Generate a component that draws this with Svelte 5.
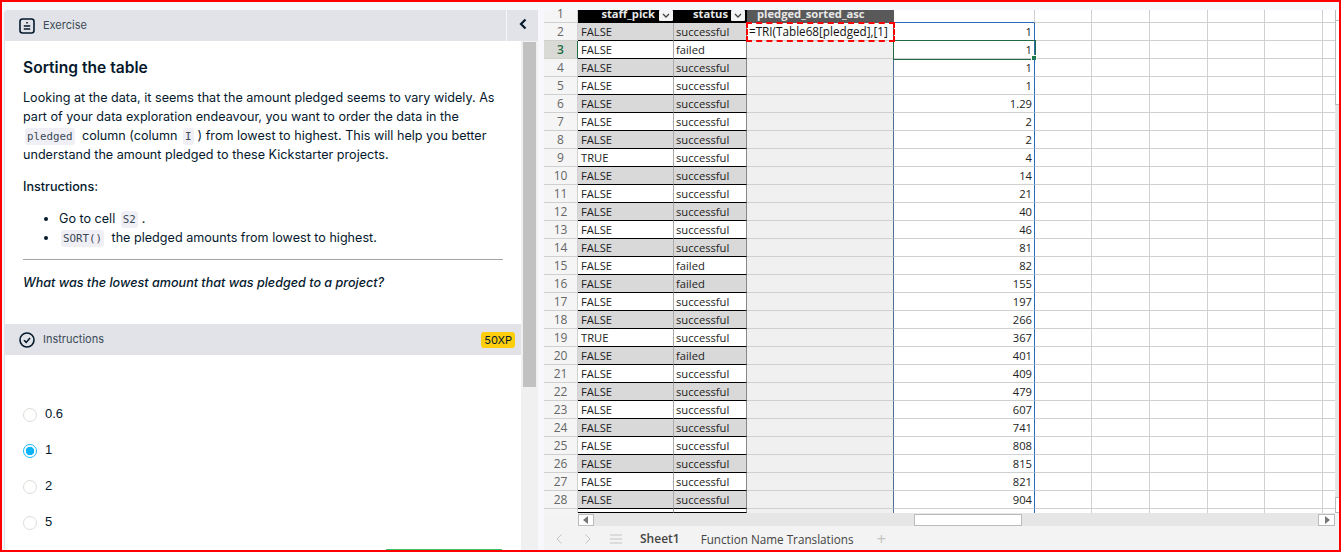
<script>
  const rows = [
    ['FALSE', 'successful', '1'],
    ['FALSE', 'failed', '1'],
    ['FALSE', 'successful', '1'],
    ['FALSE', 'successful', '1'],
    ['FALSE', 'successful', '1.29'],
    ['FALSE', 'successful', '2'],
    ['FALSE', 'successful', '2'],
    ['TRUE', 'successful', '4'],
    ['FALSE', 'successful', '14'],
    ['FALSE', 'successful', '21'],
    ['FALSE', 'successful', '40'],
    ['FALSE', 'successful', '46'],
    ['FALSE', 'successful', '81'],
    ['FALSE', 'failed', '82'],
    ['FALSE', 'failed', '155'],
    ['FALSE', 'successful', '197'],
    ['FALSE', 'successful', '266'],
    ['TRUE', 'successful', '367'],
    ['FALSE', 'failed', '401'],
    ['FALSE', 'successful', '409'],
    ['FALSE', 'successful', '479'],
    ['FALSE', 'successful', '607'],
    ['FALSE', 'successful', '741'],
    ['FALSE', 'successful', '808'],
    ['FALSE', 'successful', '815'],
    ['FALSE', 'successful', '821'],
    ['FALSE', 'successful', '904']
  ];
  const options = ['0.6', '1', '2', '5'];
  let picked = '1';
  const blanks = [0, 1, 2, 3, 4, 5];
</script>

<div class="frame">
  <section class="left">
    <header class="bar top">
      <svg class="bar-icon" width="16" height="16" viewBox="0 0 16 16" fill="none" stroke="#05192d" stroke-width="1.6">
        <rect x="1" y="1" width="14" height="14" rx="2.5" />
        <path d="M8 4v1.400M4.800 8h6.400M4.800 11h6.400" />
      </svg>
      <span>Exercise</span>
      <button class="collapse" type="button" aria-label="Collapse">
        <svg width="10" height="12" viewBox="0 0 10 12" fill="none" stroke="#05192d" stroke-width="2.200"><path d="M7.500 1.500 3 6l4.500 4.500" /></svg>
      </button>
    </header>

    <div class="panel">
      <div class="content">
        <div class="text">
          <h1>Sorting the table</h1>
          <p>Looking at the data, it seems that the amount pledged seems to vary widely. As part of your data exploration endeavour, you want to order the data in the <code>pledged</code> column (column <code>I</code>) from lowest to highest. This will help you better understand the amount pledged to these Kickstarter projects.</p>
          <p class="label">Instructions:</p>
          <ul>
            <li>Go to cell <code>S2</code>.</li>
            <li><code>SORT()</code> the pledged amounts from lowest to highest.</li>
          </ul>
          <hr />
          <p class="question">What was the lowest amount that was pledged to a project?</p>
        </div>

        <div class="bar instr">
          <svg class="bar-icon" width="16" height="16" viewBox="0 0 16 16" fill="none" stroke="#05192d" stroke-width="1.600">
            <circle cx="8" cy="8" r="7" />
            <path d="M5 8.200 7.200 10.400 11 6" />
          </svg>
          <span>Instructions</span>
          <b class="xp">50XP</b>
        </div>

        <div class="options">
          {#each options as option}
            <label class="option">
              <input type="radio" bind:group={picked} value={option} />
              <i class="dot"></i>
              <span>{option}</span>
            </label>
          {/each}
        </div>
        <div class="submit"></div>
      </div>
      <div class="scroll"><div class="thumb"></div></div>
    </div>
  </section>

  <section class="sheet">
    <div class="grid-wrap">
      <div class="rows">
        <div class="row head">
          <div class="num">1</div>
          <div class="hd c1">staff_pick<em><svg width="8" height="5" viewBox="0 0 8 5" fill="none" stroke="#444" stroke-width="1.300"><path d="M1 1l3 3 3-3" /></svg></em></div>
          <div class="hd c2">status<em><svg width="8" height="5" viewBox="0 0 8 5" fill="none" stroke="#444" stroke-width="1.300"><path d="M1 1l3 3 3-3" /></svg></em></div>
          <div class="hd c3">pledged_sorted_asc</div>
          <div class="blank c4"></div>
          {#each blanks as b}<div class="blank b{b}"></div>{/each}
        </div>
        {#each rows as row, i}
          <div class="row" class:odd={i % 2 === 0} class:active={i === 1}>
            <div class="num">{i + 2}</div>
            <div class="cell c1">{row[0]}</div>
            <div class="cell c2">{row[1]}</div>
            <div class="cell c3" class:editing={i === 0}>{#if i === 0}=TRI(Table68[pledged],[1]{/if}</div>
            <div class="cell c4">{row[2]}</div>
            {#each blanks as b}<div class="blank b{b}"></div>{/each}
          </div>
        {/each}
        <div class="row last">
          <div class="num"></div>
          <div class="cell c1"></div>
          <div class="cell c2"></div>
          <div class="cell c3"></div>
          <div class="cell c4"></div>
          {#each blanks as b}<div class="blank b{b}"></div>{/each}
        </div>
      </div>
      <div class="vscroll">
        <div class="vbtn"></div>
        <div class="vthumb"></div>
        <div class="vtrack"></div>
        <div class="vbtn low"></div>
      </div>
    </div>

    <div class="hscroll">
      <span class="arrow">
        <svg width="6" height="8" viewBox="0 0 6 8"><path d="M5 0v8L0 4z" fill="#777" /></svg>
      </span>
      <span class="hthumb"></span>
      <span class="arrow right">
        <svg width="6" height="8" viewBox="0 0 6 8"><path d="M1 0v8l5-4z" fill="#777" /></svg>
      </span>
    </div>

    <div class="tabs">
      <svg width="8" height="12" viewBox="0 0 8 12" fill="none" stroke="#c4c4c4" stroke-width="1"><path d="M6.500 1.500 2 6l4.500 4.500" /></svg>
      <svg class="next" width="8" height="12" viewBox="0 0 8 12" fill="none" stroke="#c4c4c4" stroke-width="1"><path d="M1.500 1.500 6 6l-4.500 4.500" /></svg>
      <svg class="menu" width="12" height="10" viewBox="0 0 12 10" fill="none" stroke="#c4c4c4" stroke-width="1"><path d="M0 1h12M0 5h12M0 9h12" /></svg>
      <span class="tab on">Sheet1</span>
      <span class="tab">Function Name Translations</span>
      <span class="plus">+</span>
    </div>
  </section>
</div>

<style>
  :global(body) {
    margin: 0;
    overflow: hidden;
  }

  .frame {
    box-sizing: border-box;
    width: 1341px;
    height: 552px;
    border: 2px solid #f00;
    background: #f7f7fc;
    display: flex;
    padding: 8px 0 0 2px;
    overflow: hidden;
    font-family: Inter, "Liberation Sans", sans-serif;
    color: #05192d;
  }

  .left {
    width: 534px;
    flex: none;
    display: flex;
    flex-direction: column;
  }

  .bar {
    display: flex;
    align-items: center;
    background: #e1e3e8;
    font-size: 11px;
    color: #3c4a57;
  }

  .bar span {
    margin-top: -2px;
  }

  .top {
    height: 31px;
    padding-left: 15px;
    border-radius: 4px 4px 0 0;
  }

  .bar-icon {
    margin-right: 8px;
  }

  .collapse {
    margin-left: auto;
    width: 32px;
    height: 31px;
    border: 0;
    border-left: 1px solid #f7f7fc;
    background: #e1e3e8;
    padding: 0;
  }

  .panel {
    flex: 1;
    min-height: 0;
    display: flex;
    background: #fff;
    border-left: 1px solid #e1e3e8;
  }

  .content {
    flex: 1;
    min-width: 0;
    position: relative;
  }

  .text {
    height: 283px;
    box-sizing: border-box;
    padding: 17px 18px 0 18px;
    font-size: 12.6px;
    line-height: 19px;
  }

  h1 {
    margin: 0 0 10px;
    font-size: 15.6px;
    font-weight: 600;
    line-height: 20px;
  }

  p {
    margin: 0;
  }

  .label {
    margin-top: 13px;
    font-weight: 500;
  }

  ul {
    margin: 13px 0 0;
    padding-left: 36px;
  }

  code {
    font-family: "DejaVu Sans Mono", monospace;
    font-size: 10.8px;
    line-height: 1;
    background: #efeff5;
    border-radius: 3px;
    padding: 2px;
    margin: 0 4px 0 2px;
    color: #3c4a57;
  }

  hr {
    margin: 12px 0 0;
    border: 0;
    border-top: 1px solid #a5a5a5;
  }

  .question {
    margin-top: 13px;
    font-style: italic;
    font-weight: 500;
  }

  .instr {
    height: 31px;
    padding: 0 6px 0 14px;
  }

  .xp {
    margin-left: auto;
    background: #fcce0d;
    border-radius: 3px;
    padding: 0 3px;
    height: 16px;
    line-height: 16px;
    font-size: 11px;
    font-weight: 400;
    color: #05192d;
  }

  .options {
    padding: 50px 0 0 18px;
    font-family: "Liberation Sans", sans-serif;
    font-size: 13px;
  }

  .option {
    display: flex;
    align-items: flex-start;
    height: 36px;
    gap: 8px;
    position: relative;
  }

  .option span {
    margin-top: 1px;
  }

  .option input {
    position: absolute;
    opacity: 0;
    margin: 0;
  }

  .dot {
    box-sizing: border-box;
    width: 14px;
    height: 14px;
    margin-top: 3px;
    border: 1px solid #e0ddd8;
    border-radius: 50%;
  }

  .option input:checked + .dot {
    border-color: #1ab8fb;
    background: radial-gradient(circle, #0db4fb 0 4px, #fff 4.5px);
  }

  .submit {
    position: absolute;
    left: 381px;
    bottom: 0;
    width: 116px;
    height: 1px;
    background: #3ac267;
  }

  .scroll {
    width: 17px;
    flex: none;
    background: #f0f0f0;
    padding: 1px 2px 0;
    box-sizing: border-box;
  }

  .thumb {
    height: 345px;
    background: #c1c1c1;
  }

  .sheet {
    flex: 1;
    min-width: 0;
    margin-left: 6px;
    display: flex;
    flex-direction: column;
    font-family: "Open Sans", sans-serif;
    font-size: 11.2px;
    background: #f3f3f3;
    color: #222;
  }

  .grid-wrap {
    height: 503px;
    display: flex;
    background: #fff;
    flex: none;
  }

  .rows {
    flex: 1;
    min-width: 0;
  }

  .row {
    display: flex;
    height: 18px;
    line-height: 17px;
  }

  .row > div {
    flex: none;
    box-sizing: border-box;
    border-bottom: 1px solid #d0d0d0;
  }

  .head {
    height: 13px;
    line-height: 7px;
  }

  .num {
    width: 34px;
    text-align: center;
    font-size: 12px;
    color: #666;
    background: #f5f5f5;
    border-right: 1px solid #d0d0d0;
  }

  .active .num {
    background: #d9d9d6;
    color: #1f6b43;
    font-weight: 600;
    border-right-color: #1f6b43;
  }

  .c1 { width: 96px; }
  .c2 { width: 73px; }
  .c3 { width: 147px; }
  .c4 { width: 141px; }
  .b0 { width: 57px; }
  .b1 { width: 58px; }
  .b2 { width: 58px; }
  .b3 { width: 57px; }
  .b4 { width: 58px; }
  .b5 { width: 12px; }

  .blank {
    border-right: 1px solid #d0d0d0;
  }

  .row .b5 {
    border-right: 0;
  }

  .row .hd {
    background: #000;
    color: #e8e8e8;
    font-weight: 700;
    display: flex;
    justify-content: flex-end;
    gap: 4px;
    padding-right: 1px;
    border-bottom: 0;
  }

  .hd em {
    width: 14px;
    height: 11px;
    background: #f4f4f4;
    border-radius: 1px;
    display: flex;
    align-items: center;
    justify-content: center;
  }

  .row .hd.c2 {
    gap: 3px;
    padding-right: 2px;
  }

  .row .hd.c3 {
    background: #595959;
    justify-content: flex-start;
    padding-left: 10px;
  }

  .head .blank.c4 {
    border-bottom-color: #2a6ebb;
  }

  .row .cell.c1, .row .cell.c2 {
    background: #fff;
    border-bottom: 1px solid #000;
  }

  .cell.c1 {
    padding-left: 3px;
    border-right: 1px solid #aaa;
  }

  .cell.c2 {
    padding-left: 2px;
    border-right: 1px solid #888;
  }

  .row.odd .cell.c1, .row.odd .cell.c2 {
    background: #d9d9d9;
  }

  .cell.c3 {
    background: #f0f0f0;
    border-right: 1px solid #4f6f92;
    padding-left: 2px;
  }

  .row .cell.editing {
    position: relative;
    z-index: 1;
    outline: 2px dashed #f00;
    outline-offset: -1px;
    background: #fff;
    font-size: 11.7px;
    white-space: nowrap;
    color: #111;
  }

  .cell.c4 {
    text-align: right;
    padding-right: 2px;
    border-right: 1px solid #2a6ebb;
    position: relative;
  }

  .active .c4 {
    outline: 1px solid #1f6b43;
  }

  .active .c4::after {
    content: "";
    position: absolute;
    right: -3px;
    bottom: -3px;
    width: 4px;
    height: 4px;
    background: #1f7a4a;
    border: 1px solid #fff;
  }

  .row.last {
    height: 4px;
  }

  .row.last > div {
    border-bottom: 0;
  }

  .vscroll {
    width: 4px;
    flex: none;
    display: flex;
    flex-direction: column;
    background: #e6e6e6;
  }

  .vbtn {
    height: 10px;
    background: #fff;
    border-left: 1px solid #bbb;
  }

  .vbtn.low {
    height: 16px;
    border-top: 1px solid #bbb;
    border-bottom: 1px solid #bbb;
    box-sizing: border-box;
  }

  .vthumb {
    height: 85px;
    box-sizing: border-box;
    background: #fff;
    border: 1px solid #bbb;
    border-right: 0;
  }

  .vtrack {
    flex: 1;
  }

  .hscroll {
    height: 13px;
    margin: 0 4px 0 34px;
    background: #e6e6e6;
    display: flex;
    align-items: center;
    position: relative;
  }

  .arrow {
    width: 16px;
    height: 12px;
    background: #fff;
    border: 1px solid #bbb;
    box-sizing: border-box;
    display: flex;
    align-items: center;
    justify-content: center;
  }

  .arrow.right {
    margin-left: auto;
    width: 17px;
  }

  .hthumb {
    position: absolute;
    left: 336px;
    width: 108px;
    height: 12px;
    box-sizing: border-box;
    background: #fff;
    border: 1px solid #bbb;
  }

  .tabs {
    flex: 1;
    display: flex;
    align-items: center;
    padding: 1px 0 0 11px;
    font-size: 11.7px;
    color: #444;
  }

  .next {
    margin-left: 21px;
  }

  .menu {
    margin-left: 18px;
  }

  .tab {
    margin-left: 21px;
  }

  .tab.on {
    font-weight: 600;
    margin-left: 18px;
    font-size: 12px;
  }

  .plus {
    margin-left: 23px;
    font-size: 17px;
    color: #c4c4c4;
  }
</style>
